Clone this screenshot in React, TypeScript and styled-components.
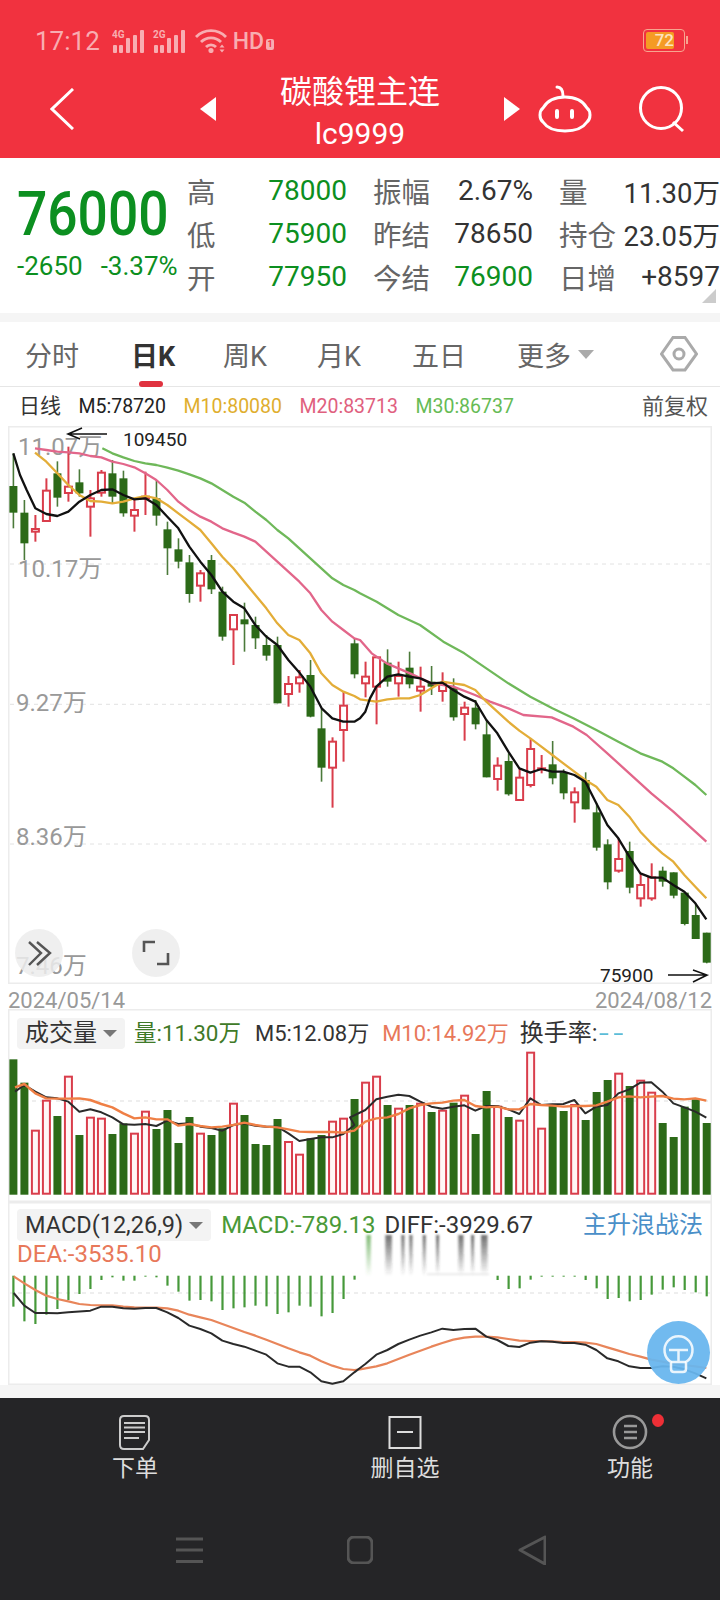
import styled, { createGlobalStyle } from "styled-components";

const FONT = `Roboto, "Noto Sans CJK SC", sans-serif`;
const GREEN = "#0c8f20";
const RED = "#d93d4b";
const DARK_GREEN = "#2c6a18";
const FADED = "#f8adb1";

const GlobalStyle = createGlobalStyle`
	html, body {
		margin: 0;
		padding: 0;
		background: #fff;
	}
	#root {
		width: 720px;
		height: 1600px;
		overflow: hidden;
	}
`;

const Page = styled.div`
	width: 720px;
	height: 1600px;
	font-family: ${FONT};
	background: #fff;
	color: #333;
	display: flex;
	flex-direction: column;
`;

// header
const Header = styled.header`
	height: 158px;
	background: #f1323f;
	display: flex;
	flex-direction: column;
	flex: none;
`;
const StatusBar = styled.div`
	height: 60px;
	box-sizing: border-box;
	padding: 22px 35px 0;
	display: flex;
	align-items: center;
	color: ${FADED};
`;
const Time = styled.span`
	font-size: 26px;
	line-height: 38px;
	margin-right: 12px;
`;
const HdText = styled.span`
	font-size: 23px;
	font-weight: 500;
	margin-left: 6px;
	display: flex;
	align-items: center;
	gap: 2px;
`;
const HdBadge = styled.span`
	width: 8px;
	height: 11px;
	margin-top: 6px;
	background: ${FADED};
	border-radius: 2px;
	color: #f1323f;
	font-size: 9px;
	font-weight: 700;
	line-height: 11px;
	text-align: center;
`;
const Battery = styled.div`
	margin-left: auto;
	width: 42px;
	height: 23px;
	margin-top: -1px;
	box-sizing: border-box;
	border: 1.5px solid #f7a58f;
	border-radius: 4px;
	padding: 2px;
	position: relative;
	&::after {
		content: "";
		position: absolute;
		right: -4px;
		top: 6px;
		width: 2px;
		height: 8px;
		background: #f7a58f;
	}
`;
const BatteryFill = styled.div`
	width: 28px;
	height: 100%;
	background: #f59b24;
	border-radius: 2px;
	color: #fde3c0;
	font-size: 17px;
	font-weight: 500;
	line-height: 16px;
	text-align: right;
`;
const NavRow = styled.div`
	flex: 1;
	display: flex;
	align-items: center;
	padding-left: 50px;
`;
const BackIcon = styled.svg`
	width: 24px;
	height: 42px;
	margin-right: 126px;
`;
const Triangle = styled.svg`
	width: 16px;
	height: 24px;
`;
const TitleBlock = styled.div`
	width: 288px;
	padding-top: 10px;
	text-align: center;
	color: #fff;
`;
const Title = styled.div`
	font-size: 32px;
	line-height: 40px;
	margin-top: -3px;
`;
const Code = styled.div`
	font-size: 30px;
	line-height: 38px;
	margin-top: 3px;
`;
const RobotIcon = styled.svg`
	width: 54px;
	height: 50px;
	margin-left: 18px;
`;
const SearchIcon = styled.svg`
	width: 46px;
	height: 48px;
	margin-left: 46px;
`;

// quote
const Quote = styled.section`
	height: 155px;
	flex: none;
	display: flex;
	position: relative;
`;
const PriceBlock = styled.div`
	width: 187px;
	flex: none;
	padding: 34px 0 0 17px;
	box-sizing: border-box;
	color: ${GREEN};
`;
const Price = styled.div`
	font-size: 62px;
	font-weight: 500;
	line-height: 44px;
	transform: scaleX(0.86);
	transform-origin: left center;
`;
const PriceChange = styled.div`
	display: flex;
	gap: 18px;
	font-size: 26px;
	line-height: 18px;
	margin-top: 21px;
	white-space: nowrap;
`;
const QuoteGrid = styled.div`
	display: grid;
	grid-template-columns: 160px 160px 161px;
	grid-auto-rows: 43px;
	column-gap: 26px;
	padding-top: 11px;
`;
const Cell = styled.div`
	display: flex;
	justify-content: space-between;
	align-items: center;
	white-space: nowrap;
`;
const CellLabel = styled.span`
	font-size: 28.5px;
	color: #666;
`;
const CellValue = styled.span<{ $green?: boolean; $size?: number }>`
	font-size: ${(p) => p.$size ?? 28}px;
	color: ${(p) => (p.$green ? GREEN : "#333")};
`;
const CornerMark = styled.div`
	position: absolute;
	left: 702px;
	top: 131px;
	width: 14px;
	height: 14px;
	background: #ccc;
	clip-path: polygon(100% 0, 100% 100%, 0 100%);
`;
const Divider = styled.div`
	height: 9px;
	flex: none;
	background: #f5f5f5;
`;

// period tabs
const Tabs = styled.nav`
	height: 65px;
	flex: none;
	box-sizing: border-box;
	border-bottom: 1px solid #e6e6e6;
	padding-left: 25px;
	display: grid;
	grid-template-columns: 106px 92px 94px 95px 105px 143px 40px;
	align-items: center;
	font-size: 27px;
	color: #666;
`;
const Tab = styled.div<{ $active?: boolean }>`
	position: relative;
	display: flex;
	align-items: center;
	height: 100%;
	font-weight: ${(p) => (p.$active ? 700 : 400)};
	color: ${(p) => (p.$active ? "#333" : "#666")};
	${(p) =>
		p.$active &&
		`&::after {
			content: "";
			position: absolute;
			left: 8px;
			bottom: -1px;
			width: 24px;
			height: 6px;
			border-radius: 3px;
			background: #e0323f;
		}`}
`;
const DownMark = styled.span<{ $size?: number; $color?: string }>`
	display: inline-block;
	width: 0;
	height: 0;
	border-left: ${(p) => p.$size ?? 8}px solid transparent;
	border-right: ${(p) => p.$size ?? 8}px solid transparent;
	border-top: ${(p) => (p.$size ?? 8) * 1.1}px solid ${(p) => p.$color ?? "#aaa"};
`;
const MoreMark = styled(DownMark)`
	margin-left: 7px;
`;

// ma legend
const Legend = styled.div`
	height: 39px;
	flex: none;
	display: flex;
	align-items: center;
	gap: 17.5px;
	padding: 0 12px 0 19px;
	font-size: 19.5px;
	white-space: nowrap;
`;
const LegendItem = styled.span<{ $color: string }>`
	color: ${(p) => p.$color};
`;
const LegendTitle = styled.span`
	font-size: 21px;
	line-height: 24px;
	margin-bottom: 2px;
	color: #333;
`;
const Adjust = styled.span`
	margin-left: auto;
	font-size: 22px;
	line-height: 24px;
	color: #555;
`;

// panels
const Panel = styled.div<{ $height: number }>`
	position: relative;
	flex: none;
	width: 704px;
	height: ${(p) => p.$height}px;
	margin: 0 8px;
	box-shadow: inset 0 0 0 1.5px #ececec;
`;
const ChartSvg = styled.svg`
	display: block;
	overflow: visible;
`;
const RoundButton = styled.div<{ $left: number }>`
	position: absolute;
	left: ${(p) => p.$left}px;
	top: 503px;
	width: 48px;
	height: 48px;
	border-radius: 50%;
	background: rgba(236, 236, 236, 0.85);
	svg {
		display: block;
	}
`;
const DateRow = styled.div`
	position: relative;
	height: 25px;
	flex: none;
	box-sizing: border-box;
	padding: 6px 8px 0;
	display: flex;
	justify-content: space-between;
	font-size: 22px;
	line-height: 22px;
	color: #999;
`;
const PanelHeader = styled.div<{ $top: number; $height: number }>`
	display: flex;
	align-items: center;
	box-sizing: content-box;
	height: ${(p) => p.$height}px;
	padding: ${(p) => p.$top}px 9px 0;
	line-height: ${(p) => p.$height}px;
	white-space: nowrap;
`;
const Chip = styled.div`
	display: flex;
	align-items: center;
	height: 100%;
	padding: 0 8px;
	background: #f3f3f3;
	border-radius: 4px;
	color: #333;
	gap: 6px;
`;
const ChipText = styled.span<{ $size: number }>`
	font-size: ${(p) => p.$size}px;
`;
const HeaderItem = styled.span<{ $color: string; $size?: number; $gap?: number }>`
	font-size: ${(p) => p.$size ?? 22}px;
	color: ${(p) => p.$color};
	margin-left: ${(p) => p.$gap ?? 16}px;
`;
const Dashes = styled.span`
	display: inline-block;
	color: #5bbcd8;
	letter-spacing: 3px;
	transform: scaleX(1.5);
	transform-origin: left center;
	margin-left: 2px;
`;
const StrategyLink = styled.span`
	margin-left: auto;
	font-size: 24px;
	color: #4a8fc8;
`;
const DeaRow = styled.div`
	padding-left: 9px;
	height: 24px;
	font-size: 24px;
	line-height: 26px;
	color: #e8785a;
`;
const HeaderGap = styled.div`
	height: 3px;
`;
const BulbButton = styled.div`
	position: absolute;
	left: 638.5px;
	top: 118.5px;
	width: 63px;
	height: 63px;
	border-radius: 50%;
	background: rgba(104, 182, 238, 0.94);
	svg {
		display: block;
	}
`;
const PanelGap = styled.div`
	height: 12.5px;
	flex: none;
	background: #f5f5f5;
`;

// bottom bar
const BottomBar = styled.footer`
	flex: 1;
	background: #252527;
	display: flex;
	flex-direction: column;
	color: #ddd;
`;
const Actions = styled.div`
	display: grid;
	grid-template-columns: 270px 270px 180px;
`;
const Action = styled.div`
	position: relative;
	display: flex;
	flex-direction: column;
	align-items: center;
	padding-top: 16px;
	font-size: 23px;
	line-height: 30px;
	svg {
		margin-bottom: 3px;
	}
`;
const RedDot = styled.span`
	position: absolute;
	left: 111.5px;
	top: 16px;
	width: 12px;
	height: 13px;
	border-radius: 50%;
	background: #ee2f36;
`;
const SystemKeys = styled.div`
	display: flex;
	justify-content: center;
	align-items: center;
	gap: 144.5px;
	margin-top: 51px;
`;

type CandleRow = ["r" | "g", number, number, number, number];

// high, body top, body bottom, low -- 3x px, from y=320
const candlesTop: CandleRow[] = [
	["g", 400, 498, 578, 625],
	["g", 540, 578, 670, 720],
	["r", 585, 627, 635, 665],
	["r", 475, 512, 603, 603],
	["g", 424, 460, 533, 560],
	["r", 380, 500, 519, 545],
	["g", 448, 487, 520, 530],
	["r", 510, 535, 560, 650],
	["r", 450, 458, 518, 530],
	["g", 420, 460, 530, 550],
	["g", 452, 475, 580, 590],
	["r", 540, 570, 587, 635],
	["r", 455, 530, 535, 585],
	["g", 480, 535, 587, 617],
	["g", 605, 628, 685, 765],
	["g", 655, 688, 725, 745],
	["g", 705, 727, 822, 848],
	["r", 750, 760, 797, 845],
	["g", 705, 720, 808, 822],
	["g", 800, 815, 950, 962],
	["r", 885, 885, 928, 1035],
	["g", 848, 898, 913, 995],
	["g", 890, 915, 955, 987],
	["g", 945, 975, 1007, 1022],
	["g", 950, 975, 1150, 1150],
	["r", 1068, 1092, 1122, 1160],
	["r", 1050, 1072, 1090, 1118],
	["g", 1020, 1065, 1190, 1192],
];
// same, from y=640
const candlesBottom: CandleRow[] = [
	["g", 205, 265, 383, 425],
	["r", 292, 305, 383, 503],
	["r", 155, 197, 270, 365],
	["g", -3, 10, 103, 115],
	["r", 65, 110, 130, 172],
	["r", 48, 52, 140, 253],
	["g", 28, 68, 125, 140],
	["r", 65, 108, 130, 170],
	["g", 35, 83, 133, 145],
	["r", 80, 140, 152, 215],
	["g", 78, 125, 140, 165],
	["r", 97, 130, 153, 185],
	["g", 115, 143, 232, 242],
	["r", 185, 203, 222, 302],
	["g", 180, 203, 253, 268],
	["g", 240, 283, 412, 412],
	["r", 352, 377, 417, 452],
	["g", 340, 363, 463, 467],
	["r", 385, 413, 480, 480],
	["r", 295, 327, 435, 442],
	["r", 345, 385, 388, 400],
	["g", 303, 373, 415, 433],
	["g", 388, 397, 460, 478],
	["r", 442, 457, 487, 548],
	["g", 397, 420, 508, 508],
	["g", 490, 517, 623, 632],
	["g", 598, 613, 727, 748],
	["r", 595, 657, 692, 698],
	["g", 605, 633, 743, 760],
	["r", 700, 735, 775, 800],
	["r", 670, 712, 775, 782],
	["g", 680, 692, 725, 740],
	["g", 697, 697, 767, 775],
	["g", 755, 758, 852, 856],
	["g", 790, 825, 897, 897],
	["g", 878, 878, 968, 970],
];

type Pt = [number, number];

const toPage = (list: Pt[], ox: number, oy: number) => list.map(([x, y]) => `${ox + x / 3},${oy + y / 3}`);
const line = (...parts: string[][]) => parts.flat().join(" ");

const m5 = line(
	toPage([[40,400],[60,465],[80,510],[106,565],[139,582],[172,588],[205,575],[238,545],[271,525],[304,510],[337,508],[370,525],[403,538],[436,535],[469,555],[502,590],[535,625],[568,680],[601,725],[634,765],[667,815],[700,845],[733,865],[766,915],[799,950],[832,975],[865,1020],[900,1060],[931,1100],[965,1165],[997,1195],[1030,1205],[1063,1205]], 0, 320),
	toPage([[0,235],[16,215],[30,175],[49,140],[82,110],[115,103],[148,110],[181,115],[214,130],[247,128],[280,150],[313,170],[346,185],[379,240],[412,280],[445,335],[478,385],[511,398],[544,387],[577,395],[610,395],[643,405],[676,425],[709,490],[742,555],[775,595],[808,650],[841,700],[874,713],[907,713],[940,735],[973,755],[1006,790],[1039,838]], 360, 640),
);
const m10 = line(
	toPage([[105,398],[139,425],[172,460],[205,495],[238,525],[271,543],[304,545],[337,550],[370,545],[403,535],[436,528],[469,535],[502,555],[535,580],[568,605],[601,630],[634,670],[667,710],[700,745],[733,785],[766,825],[799,865],[832,910],[865,945],[898,960],[931,1000],[964,1060],[997,1095],[1030,1115],[1063,1128]], 0, 320),
	toPage([[0,178],[49,185],[82,178],[115,175],[148,175],[181,165],[214,145],[247,125],[280,130],[313,135],[346,150],[379,185],[412,215],[445,245],[478,272],[511,295],[544,320],[577,345],[610,370],[643,395],[676,420],[709,440],[742,480],[775,495],[808,530],[841,575],[874,610],[907,640],[940,665],[973,705],[1006,740],[1039,775]], 360, 640),
);
const m20 = line(
	toPage([[105,385],[139,390],[172,395],[205,397],[238,400],[271,408],[304,412],[337,425],[370,432],[403,442],[436,460],[469,480],[502,510],[535,545],[568,570],[601,590],[634,605],[667,625],[700,638],[733,650],[766,665],[799,695],[832,725],[865,755],[898,785],[931,820],[964,870],[997,905],[1030,930],[1063,955]], 0, 320),
	toPage([[0,0],[35,40],[80,70],[150,100],[215,130],[280,140],[345,165],[390,185],[445,205],[490,225],[575,232],[640,260],[680,285],[742,340],[808,400],[874,460],[940,515],[1006,575],[1039,605]], 360, 640),
);
const m30 = line(
	toPage([[307,385],[337,400],[370,412],[403,423],[436,430],[469,435],[502,443],[535,452],[568,463],[601,475],[634,490],[667,510],[700,530],[733,548],[766,575],[799,600],[832,630],[865,655],[898,685],[931,715],[964,745],[997,775],[1030,795],[1063,810]], 0, 320),
	toPage([[0,820],[50,845],[115,885],[180,915],[250,965],[313,1000]], 360, 320),
	toPage([[379,85],[445,130],[511,170],[577,205],[640,235],[709,270],[775,305],[841,340],[907,365],[940,385],[973,410],[1006,435],[1039,465]], 360, 640),
);

// top of each volume bar, 3x px from y=1010
const volumeTops = [148,218,362,272,318,200,375,323,326,372,340,371,305,357,300,399,321,371,375,355,281,315,402,405,327,396,434,385,375,335,326,267,218,200,285,296,285,281,306,302,278,257,372,243,290,321,332,128,356,287,303,285,330,246,210,191,228,212,248,339,381,290,268,339];
const volumeRed = new Set([2,3,5,7,8,11,12,17,20,25,26,29,30,32,33,35,37,39,41,44,46,47,48,51,55,57,58]);

const volM5 = line(
	toPage([[45,245],[73,225],[106,245],[139,262],[172,265],[205,275],[238,305],[271,298],[304,307],[337,322],[370,343],[403,344],[436,342],[469,348],[502,332],[535,342],[568,340],[601,350],[634,354],[667,362],[700,345],[733,340],[766,347],[799,350],[832,350],[865,370],[898,393],[931,387],[964,382],[997,382],[1030,372],[1063,345]], 0, 1010),
	toPage([[-30,322],[16,300],[49,268],[82,260],[115,254],[148,258],[181,275],[214,290],[247,296],[280,290],[313,286],[346,302],[379,288],[412,288],[445,298],[478,312],[511,265],[544,285],[577,283],[610,282],[643,270],[676,310],[709,290],[742,285],[775,250],[808,238],[841,218],[874,217],[907,245],[940,280],[973,292],[1006,305],[1039,323]], 360, 1010),
);
const volM10 = line(
	toPage([[45,232],[73,222],[106,250],[139,265],[172,266],[205,266],[238,265],[271,270],[304,282],[337,292],[370,310],[403,325],[436,322],[469,328],[502,328],[535,347],[568,342],[601,348],[634,352],[667,350],[700,345],[733,338],[766,345],[799,350],[832,352],[865,358],[898,365],[931,366],[964,366],[997,366],[1030,368],[1063,362]], 0, 1010),
	toPage([[16,335],[49,325],[82,322],[115,312],[148,295],[181,285],[214,280],[247,278],[280,272],[313,270],[346,288],[379,292],[412,290],[445,298],[478,298],[511,282],[544,285],[577,287],[610,290],[643,288],[676,288],[709,286],[742,275],[775,262],[808,259],[841,262],[874,260],[907,258],[940,266],[973,268],[1006,265],[1039,272]], 360, 1010),
);

// bottom end of each macd bar, 3x px from y=1195, null where the picture is smeared
const macdBars: (number | null)[] = [338,382,390,362,345,318,300,285,258,250,260,260,248,250,275,293,320,318,322,348,343,340,335,337,360,355,335,338,367,357,315,257,null,null,null,null,null,null,null,null,null,null,null,null,258,285,283,257,248,248,248,248,258,283,315,312,322,318,302,287,280,288,295,307];

const macdLine = line(
	toPage([[41,297],[73,335],[106,357],[139,357],[172,358],[205,355],[271,350],[304,338],[337,338],[370,343],[403,344],[436,342],[469,342],[502,355],[535,372],[568,395],[601,405],[634,418],[667,440],[700,450],[733,458],[766,470],[799,482],[832,508],[865,518],[898,518],[931,535],[964,562],[997,569],[1030,562],[1063,535]], 0, 1195),
	toPage([[0,522],[16,510],[49,482],[82,468],[115,450],[148,437],[181,425],[214,415],[247,404],[280,408],[313,405],[346,404],[379,428],[412,438],[445,456],[478,459],[511,446],[544,442],[577,443],[610,447],[643,447],[676,452],[709,468],[742,493],[775,502],[808,517],[841,522],[874,522],[907,517],[940,518],[973,526],[1006,538],[1039,553]], 360, 1195),
);
const deaLine = line(
	toPage([[41,247],[73,268],[106,288],[139,305],[172,315],[205,322],[238,330],[271,333],[304,334],[337,334],[370,338],[403,340],[436,341],[469,341],[502,343],[535,350],[568,362],[601,370],[634,378],[667,390],[700,402],[733,414],[766,425],[799,437],[832,450],[865,463],[898,475],[931,485],[964,502],[997,515],[1030,525],[1063,528]], 0, 1195),
	toPage([[0,526],[49,517],[82,508],[115,495],[148,482],[181,470],[214,458],[247,447],[280,437],[313,431],[346,428],[379,428],[412,430],[445,435],[478,440],[511,441],[544,441],[577,442],[610,444],[643,444],[676,446],[709,450],[742,460],[775,470],[808,480],[841,488],[874,497],[907,503],[940,510],[973,513],[1006,517],[1039,522]], 360, 1195),
);

// the smear under the DIFF text, x and width in 3x px from x=360
const smears: [number, number, string][] = [[25,12,"url(#smearGreen)"],[85,18,"url(#smear)"],[128,8,"url(#smear)"],[152,8,"url(#smear)"],[192,8,"url(#smear)"],[232,8,"url(#smear)"],[302,14,"url(#smear)"],[337,8,"url(#smear)"],[372,18,"url(#smear)"]];

const barX = (i: number) => 13.4 + i * 11.005;

function Candle({ row, i, baseY }: { row: CandleRow; i: number; baseY: number }) {
	const [kind, high, top, bottom, low] = row;
	const x = barX(i);
	const y = (v: number) => baseY + v / 3;
	if (kind === "g") {
		return (
			<g>
				<line x1={x} x2={x} y1={y(high)} y2={y(low)} stroke="#4b7a3a" strokeWidth="1.6" />
				<rect x={x - 4} y={y(top)} width="8" height={(bottom - top) / 3} fill={DARK_GREEN} />
			</g>
		);
	}
	return (
		<g>
			<line x1={x} x2={x} y1={y(high)} y2={y(low)} stroke={RED} strokeWidth="2" />
			<rect x={x - 3.5} y={y(top)} width="7" height={(bottom - top) / 3} fill="#fff" stroke={RED} strokeWidth="2" />
		</g>
	);
}

function MainChart() {
	return (
		<ChartSvg width="704" height="558" viewBox="8 426 704 558">
			{[564, 704.3, 844].map((y) => (
				<line key={y} x1="10" x2="710" y1={y} y2={y} stroke="#e2e2e2" strokeDasharray="4 4" />
			))}
			<g fontSize="24" fill="#999" fontFamily={FONT}>
				<text x="18" y="455">11.07万</text>
				<text x="18" y="577">10.17万</text>
				<text x="16" y="711">9.27万</text>
				<text x="16" y="845">8.36万</text>
				<text x="16" y="974">7.46万</text>
			</g>
			{candlesTop.map((row, i) => (
				<Candle key={i} row={row} i={i} baseY={320} />
			))}
			{candlesBottom.map((row, i) => (
				<Candle key={i} row={row} i={i + 28} baseY={640} />
			))}
			<g fill="none" strokeWidth="2.3" strokeLinejoin="round">
				<polyline points={m30} stroke="#6fb85a" />
				<polyline points={m20} stroke="#e2668a" />
				<polyline points={m10} stroke="#e3ad38" />
				<polyline points={m5} stroke="#111" />
			</g>
			<g stroke="#111" strokeWidth="1.6" fill="none">
				<path d="M107 434H68M82 428L68 434L80 439" />
				<path d="M668 975H707M693 970L707 975L693 982" />
			</g>
			<g fontSize="19" fill="#222" fontFamily={FONT}>
				<text x="123" y="446">109450</text>
				<text x="600" y="982">75900</text>
			</g>
		</ChartSvg>
	);
}

function VolumeChart() {
	const base = 1193.7;
	return (
		<ChartSvg width="704" height="150" viewBox="8 1052 704 150">
			<line x1="32" x2="710" y1="1101" y2="1101" stroke="#ddd" strokeDasharray="4 4" />
			{volumeTops.map((top, i) => {
				const y = 1010 + top / 3;
				return volumeRed.has(i) ? (
					<rect key={i} x={barX(i) - 3.5} y={y} width="7" height={base - y} fill="#fff6f6" stroke={RED} strokeWidth="2" />
				) : (
					<rect key={i} x={barX(i) - 4} y={y} width="8" height={base - y + 1} fill={DARK_GREEN} />
				);
			})}
			<polyline points={volM5} fill="none" stroke="#2a2a2a" strokeWidth="2" strokeLinejoin="round" />
			<polyline points={volM10} fill="none" stroke="#ef7f45" strokeWidth="2.4" strokeLinejoin="round" />
		</ChartSvg>
	);
}

function MacdChart() {
	return (
		<ChartSvg width="704" height="120" viewBox="8 1266 704 120">
			<defs>
				<linearGradient id="smear" x1="0" y1="0" x2="0" y2="1">
					<stop offset="0" stopColor="#333" stopOpacity="0.7" />
					<stop offset="1" stopColor="#333" stopOpacity="0" />
				</linearGradient>
				<linearGradient id="smearGreen" x1="0" y1="0" x2="0" y2="1">
					<stop offset="0" stopColor="#4a9e3a" stopOpacity="0.7" />
					<stop offset="1" stopColor="#4a9e3a" stopOpacity="0" />
				</linearGradient>
				<filter id="soft" x="-20%" y="-5%" width="140%" height="110%">
					<feGaussianBlur stdDeviation="1" />
				</filter>
			</defs>
			<line x1="10" x2="710" y1="1294" y2="1294" stroke="#ddd" strokeDasharray="4 4" />
			{macdBars.map((end, i) =>
				end === null ? null : (
					<line key={i} x1={barX(i)} x2={barX(i)} y1="1276.7" y2={1195 + end / 3} stroke="#46993a" strokeWidth="2.2" />
				),
			)}
			<g filter="url(#soft)">
				{smears.map(([x, w, fill]) => (
					<rect key={x} x={360 + (x - w / 2) / 3} y="1236" width={w / 3 + 0.5} height="41" fill={fill} />
				))}
				<rect x="427" y="1274.5" width="62" height="1.5" fill="#e4e4e4" />
			</g>
			<polyline points={deaLine} fill="none" stroke="#e8855a" strokeWidth="2.2" strokeLinejoin="round" />
			<polyline points={macdLine} fill="none" stroke="#2a2a2a" strokeWidth="2" strokeLinejoin="round" />
		</ChartSvg>
	);
}

function SignalIcon({ label }: { label: string }) {
	const bars: [number, number][] = [[1, 8], [7, 8], [14, 15], [21, 18], [28, 23]];
	return (
		<svg width="34" height="24" viewBox="0 0 34 24" style={{ marginRight: 7 }}>
			<text x="0" y="9" fontSize="10" fontWeight="700" fill={FADED} fontFamily={FONT}>{label}</text>
			{bars.map(([x, h]) => (
				<rect key={x} x={x} y={24 - h} width="4" height={h} rx="1" fill={FADED} />
			))}
		</svg>
	);
}

export default function App() {
	return (
		<Page>
			<GlobalStyle />
			<Header>
				<StatusBar>
					<Time>17:12</Time>
					<SignalIcon label="4G" />
					<SignalIcon label="2G" />
					<svg width="33" height="24" viewBox="195 28 33 24" fill="none" stroke={FADED} strokeWidth="2.8">
						<path d="M197 36A21 21 0 0 1 227 36" />
						<path d="M202 41A14 14 0 0 1 222 41" />
						<path d="M207 46A7 7 0 0 1 217 46" />
						<circle cx="212" cy="49.5" r="1.2" fill={FADED} />
						<path d="M223 43.5L220.5 46.5H225.5ZM223 51.5L220.5 48.5H225.5Z" fill={FADED} stroke="none" />
					</svg>
					<HdText>
						HD
						<HdBadge>1</HdBadge>
					</HdText>
					<Battery>
						<BatteryFill>72</BatteryFill>
					</Battery>
				</StatusBar>
				<NavRow>
					<BackIcon viewBox="50 88 24 42" fill="none" stroke="#fff" strokeWidth="3">
						<polyline points="73,89 52,109 73,129" />
					</BackIcon>
					<Triangle viewBox="0 0 16 24">
						<polygon points="16,0 16,24 0,12" fill="#fff" />
					</Triangle>
					<TitleBlock>
						<Title>碳酸锂主连</Title>
						<Code>lc9999</Code>
					</TitleBlock>
					<Triangle viewBox="0 0 16 24">
						<polygon points="0,0 0,24 16,12" fill="#fff" />
					</Triangle>
					<RobotIcon viewBox="538 85 54 50" fill="none" stroke="#fff" strokeWidth="3" strokeLinecap="round">
						<path d="M565 98C575 98 583 102 587 109C591 112 591 120 587 123C583 129 575 132 565 132C555 132 547 129 543 123C539 120 539 112 543 109C547 102 555 98 565 98Z" />
						<path d="M557 88C561 88 563 91 563 97" />
						<path d="M557 112V118M572 112V118" strokeWidth="4" />
					</RobotIcon>
					<SearchIcon viewBox="637 86 46 48" fill="none" stroke="#fff" strokeWidth="3">
						<circle cx="660" cy="109" r="20.5" />
						<path d="M672 123L682 132" />
					</SearchIcon>
				</NavRow>
			</Header>

			<Quote>
				<PriceBlock>
					<Price>76000</Price>
					<PriceChange>
						<span>-2650</span>
						<span>-3.37%</span>
					</PriceChange>
				</PriceBlock>
				<QuoteGrid>
					<Cell><CellLabel>高</CellLabel><CellValue $green>78000</CellValue></Cell>
					<Cell><CellLabel>振幅</CellLabel><CellValue>2.67%</CellValue></Cell>
					<Cell><CellLabel>量</CellLabel><CellValue $size={27.5}>11.30万</CellValue></Cell>
					<Cell><CellLabel>低</CellLabel><CellValue $green>75900</CellValue></Cell>
					<Cell><CellLabel>昨结</CellLabel><CellValue>78650</CellValue></Cell>
					<Cell><CellLabel>持仓</CellLabel><CellValue $size={27.5}>23.05万</CellValue></Cell>
					<Cell><CellLabel>开</CellLabel><CellValue $green>77950</CellValue></Cell>
					<Cell><CellLabel>今结</CellLabel><CellValue $green>76900</CellValue></Cell>
					<Cell><CellLabel>日增</CellLabel><CellValue>+8597</CellValue></Cell>
				</QuoteGrid>
				<CornerMark />
			</Quote>
			<Divider />

			<Tabs>
				<Tab>分时</Tab>
				<Tab $active>日K</Tab>
				<Tab>周K</Tab>
				<Tab>月K</Tab>
				<Tab>五日</Tab>
				<Tab>更多<MoreMark $size={8.5} /></Tab>
				<svg width="38" height="36" viewBox="659 336 38 36" fill="none" stroke="#aaa" strokeWidth="3">
					<polygon points="672,337.5 684,337.5 695.5,354 684,370 672,370 660.5,354" />
					<circle cx="678" cy="354" r="5" />
				</svg>
			</Tabs>

			<Legend>
				<LegendTitle>日线</LegendTitle>
				<LegendItem $color="#222">M5:78720</LegendItem>
				<LegendItem $color="#e0ae2e">M10:80080</LegendItem>
				<LegendItem $color="#e0607e">M20:83713</LegendItem>
				<LegendItem $color="#66bb55">M30:86737</LegendItem>
				<Adjust>前复权</Adjust>
			</Legend>

			<Panel $height={558}>
				<MainChart />
				<RoundButton $left={7}>
					<svg width="48" height="48" viewBox="0 0 48 48" fill="none" stroke="#555" strokeWidth="2.4">
						<path d="M14 13L26 24L14 36M22 13L35 24L22 36" />
					</svg>
				</RoundButton>
				<RoundButton $left={124}>
					<svg width="48" height="48" viewBox="0 0 48 48" fill="none" stroke="#555" strokeWidth="2.6">
						<path d="M12 23V13H23M25 35H36V24" />
					</svg>
				</RoundButton>
			</Panel>
			<DateRow>
				<span>2024/05/14</span>
				<span>2024/08/12</span>
			</DateRow>

			<Panel $height={193}>
				<PanelHeader $top={9} $height={31}>
					<Chip>
						<ChipText $size={24}>成交量</ChipText>
						<DownMark $size={7} $color="#777" />
					</Chip>
					<HeaderItem $color="#3f7a28" $size={22.5} $gap={9}>量:11.30万</HeaderItem>
					<HeaderItem $color="#333" $gap={14}>M5:12.08万</HeaderItem>
					<HeaderItem $color="#e8785a" $gap={13}>M10:14.92万</HeaderItem>
					<HeaderItem $color="#333" $size={24} $gap={11}>换手率:<Dashes>--</Dashes></HeaderItem>
				</PanelHeader>
				<HeaderGap />
				<VolumeChart />
			</Panel>

			<Panel $height={183}>
				<PanelHeader $top={7} $height={32}>
					<Chip>
						<ChipText $size={23.5}>MACD(12,26,9)</ChipText>
						<DownMark $size={7} $color="#777" />
					</Chip>
					<HeaderItem $color="#4a9a38" $size={24} $gap={10}>MACD:-789.13</HeaderItem>
					<HeaderItem $color="#333" $size={24} $gap={9}>DIFF:-3929.67</HeaderItem>
					<StrategyLink>主升浪战法</StrategyLink>
				</PanelHeader>
				<DeaRow>DEA:-3535.10</DeaRow>
				<MacdChart />
				<BulbButton>
					<svg width="63" height="63" viewBox="0 0 63 63" fill="none" stroke="rgba(255,255,255,0.85)" strokeWidth="2.5">
						<path d="M24 41A14 14 0 1 1 39 41V48Q39 51 36 51H27Q24 51 24 48Z" />
						<path d="M22 29H41M31.5 29V41M24 41H39" />
					</svg>
				</BulbButton>
			</Panel>
			<PanelGap />

			<BottomBar>
				<Actions>
					<Action>
						<svg width="34" height="37" viewBox="118 1414 34 37" fill="none" stroke="#ccc" strokeWidth="2">
							<path d="M124 1416H145Q149 1416 149 1420V1440L143 1449H124Q120 1449 120 1445V1420Q120 1416 124 1416Z" />
							<path d="M124 1423H145M124 1427.5H145M124 1432H145M124 1438H139" />
						</svg>
						下单
					</Action>
					<Action>
						<svg width="34" height="37" viewBox="387 1414 34 37" fill="none" stroke="#ddd" strokeWidth="2">
							<rect x="388.5" y="1417" width="31" height="31" />
							<path d="M396 1432H412" />
						</svg>
						删自选
					</Action>
					<Action>
						<svg width="36" height="37" viewBox="611 1414 36 37" fill="none" stroke="#999" strokeWidth="2.6">
							<circle cx="629" cy="1432" r="16" />
							<path d="M623 1426H636M623 1432H636M623 1438H636" />
						</svg>
						功能
						<RedDot />
					</Action>
				</Actions>
				<SystemKeys>
					<svg width="28" height="26" viewBox="174 1538 28 26" fill="none" stroke="#555" strokeWidth="3">
						<path d="M175 1540H202M175 1551H202M175 1562.5H202" />
					</svg>
					<svg width="26" height="28" viewBox="347 1537 26 28" fill="none" stroke="#555" strokeWidth="3">
						<rect x="348" y="1538" width="24" height="26" rx="6" />
					</svg>
					<svg width="28" height="30" viewBox="516 1536 28 30" fill="none" stroke="#555" strokeWidth="3" strokeLinejoin="round">
						<path d="M543 1538V1565L518 1551Z" />
					</svg>
				</SystemKeys>
			</BottomBar>
		</Page>
	);
}
